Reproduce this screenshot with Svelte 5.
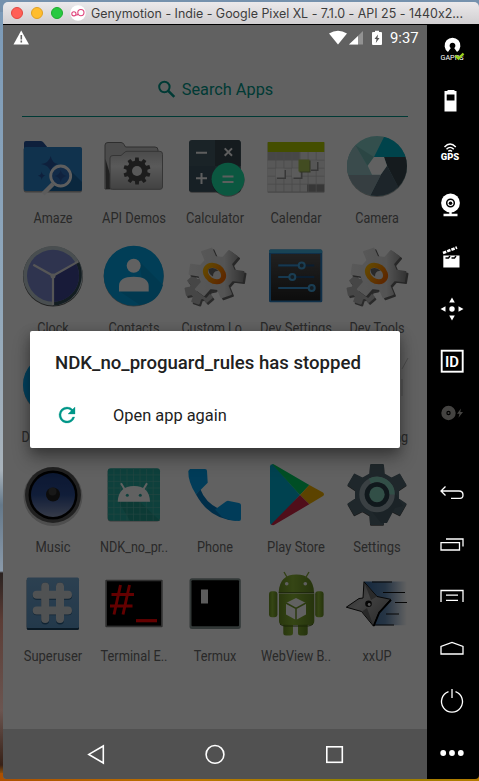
<script>
  const apps = [
    { id: 'amaze', label: 'Amaze', w: 39 },
    { id: 'api', label: 'API Demos', w: 64 },
    { id: 'calc', label: 'Calculator', w: 58 },
    { id: 'calendar', label: 'Calendar', w: 51 },
    { id: 'camera', label: 'Camera', w: 43.5 },
    { id: 'clock', label: 'Clock', w: 31.5 },
    { id: 'contacts', label: 'Contacts', w: 51 },
    { id: 'devgear', label: 'Custom Lo..', w: 67 },
    { id: 'devset', label: 'Dev Settings', w: 72 },
    { id: 'devgear', label: 'Dev Tools', w: 55 },
    { id: 'download', label: 'Downloads', w: 63 },
    { id: 'none', label: '', w: 10 },
    { id: 'none', label: '', w: 10 },
    { id: 'none', label: '', w: 10 },
    { id: 'messaging', label: 'Messaging', w: 62 },
    { id: 'music', label: 'Music', w: 35 },
    { id: 'ndk', label: 'NDK_no_pr..', w: 68 },
    { id: 'phone', label: 'Phone', w: 36 },
    { id: 'play', label: 'Play Store', w: 58 },
    { id: 'settings', label: 'Settings', w: 47.5 },
    { id: 'superuser', label: 'Superuser', w: 58.5 },
    { id: 'terminal', label: 'Terminal E..', w: 67 },
    { id: 'termux', label: 'Termux', w: 42.5 },
    { id: 'webview', label: 'WebView B..', w: 70 },
    { id: 'ninja', label: 'xxUP', w: 29 }
  ];

  // Closed outline of a cog: n teeth between the inner and the outer radius.
  function gear(cx, cy, n, ro, ri, base, tip, rot, squash = 1) {
    const pts = [];
    for (let i = 0; i < n; i++) {
      const a = rot + (i * 2 * Math.PI) / n;
      for (const [r, d] of [[ri, -base], [ro, -tip], [ro, tip], [ri, base]]) {
        pts.push((cx + r * Math.cos(a + d)).toFixed(2) + ' ' + (cy + squash * r * Math.sin(a + d)).toFixed(2));
      }
    }
    return 'M' + pts.join('L') + 'Z';
  }
  const apiGear = gear(35, 37, 10, 13.7, 10.5, 0.2, 0.13, 0.31);
  const settingsGear = gear(32, 31.5, 6, 30, 21.5, 0.31, 0.2, Math.PI / 6);
  const bigGear = gear(33.5, 29, 6, 27, 17.5, 0.3, 0.19, 0.15, 0.92);
  const smallGear = gear(17, 45, 6, 14.5, 9.5, 0.36, 0.24, 0.85);
  const gridLines = [11.9, 18.4, 25, 31.5, 38, 44.6, 51.2];
</script>

<div class="desktop">
  <div class="window">
    <header class="titlebar">
      <i class="dot red"></i><i class="dot yellow"></i><i class="dot green"></i>
      <svg class="logo" width="16" height="16" viewBox="0 0 16 16">
        <circle cx="8" cy="8" r="7.8" fill="#fff" />
        <g fill="none" stroke="#e0457c" stroke-width="1.1"><circle cx="3.900" cy="8.800" r="2.100" /><circle cx="10.900" cy="7.600" r="3.100" /><path d="M6 9.700q1 .8 2-.5" /></g>
      </svg>
      <svg class="title" width="376" height="20"><text x="1" y="15.2" textLength="372" lengthAdjust="spacingAndGlyphs">Genymotion - Indie - Google Pixel XL - 7.1.0 - API 25 - 1440x2...</text></svg>
    </header>

    <div class="body">
      <main class="phone">
        <div class="launcher">
          <div class="search">
            <svg width="20" height="20" viewBox="0 0 20 20"><g fill="none" stroke="#009688" stroke-width="2"><circle cx="7.400" cy="7" r="5.200" /><path d="M11 10.600L17.300 16.900" stroke-width="2.600" /></g></svg>
            <span>Search Apps</span>
          </div>
          <div class="grid">
            {#each apps as app}
              <div class="app">
                <svg class="icon" width="64" height="64" viewBox="0 0 64 64">
                  {#if app.id === 'amaze'}
                    <path d="M3 14V9q0-2 2-2h15q1.5 0 2.5 1.5L27 14z" fill="#24549b" />
                    <rect x="2.7" y="13.5" width="58.3" height="45" rx="2" fill="#222" opacity=".4" />
                    <rect x="2.7" y="13" width="58.3" height="44" rx="2" fill="#2a80c6" />
                    <path d="M47 34L61 48V55q0 2-2 2H26z" fill="#1c649f" />
                    <path d="M29.700 22Q31 29 37 30Q31 31 29.700 38Q28 31 20 30Q28 29 29.700 22M20.700 37.500q.5 4 4 4.200q-3.500.2-4 4.300q-.5-4-4-4.300q3.500-.2 4-4.200" fill="#25539b" />
                    <circle cx="39.700" cy="42" r="10" fill="#306fb9" stroke="#f2f2f2" stroke-width="2.800" />
                    <path d="M39.700 36q1 5 6 6q-5 1-6 6q-1-5-6-6q5-1 6-6" fill="#2a589f" />
                    <path d="M32 50L22 60" stroke="#eee" stroke-width="4.500" />
                  {:else if app.id === 'api'}
                    <path d="M3 55V11q0-2.500 3-2.500h13q2 0 3 2l1.500 2.500H53q3 0 3 3v38z" fill="#c4c4c4" stroke="#777" stroke-width="1" />
                    <path d="M3.500 25L8 40V55H4z" fill="#555" />
                    <path d="M8 53V24q0-2.500 3-2.500h8l4-3.500q1-.7 2-.7H58q2.500 0 2.500 3V53q0 2.300-2.500 2.300H10.500Q8 55.300 8 53z" fill="url(#silver)" stroke="#888" />
                    <path d={apiGear} fill="#484848" /><circle cx="35" cy="37" r="5" fill="#e2e2e2" />
                  {:else if app.id === 'calc'}
                    <rect x="6" y="6.800" width="51.700" height="52" rx="3" opacity=".4" />
                    <rect x="6" y="6" width="51.700" height="51.700" rx="3" fill="#455a64" />
                    <path d="M32 6h22.700q3 0 3 3V32H32z" fill="#37474f" /><path d="M6 32h26v25.700H9q-3 0-3-3z" fill="#3c5360" />
                    <path d="M13 18.700h11M13 44.300h11M18.500 39v11M41.700 14.400l7.300 7.300m0-7.300l-7.300 7.300" stroke="#f2f2f2" stroke-width="2" />
                    <circle cx="45" cy="46.300" r="16.500" opacity=".4" /><circle cx="45" cy="45.300" r="16.500" fill="#1de0a6" />
                    <path d="M39.500 42.500h11M39.500 48h11" stroke="#eaf5f0" stroke-width="2.200" />
                  {:else if app.id === 'calendar'}
                    <rect x="3.700" y="9" width="56.600" height="49.500" opacity=".4" />
                    <rect x="3.700" y="8" width="56.600" height="49.700" fill="#e2e2e2" />
                    <path d="M3.700 18h32v8h-32z" fill="#b8b8b8" /><path d="M43 50h17.300v7.700H43z" fill="#8d8d8d" />
                    <path d="M3.700 26.200H60.300M3.700 34.200H60.300M3.700 42.200H60.300M3.700 50.200H60.300M11.800 18v40M19.900 18v40M28 18v40M36 18v40M44.100 18v40M52.200 18v40" stroke="#bdbdbd" stroke-width=".8" />
                    <path d="M3.700 8h56.600v10H3.700z" fill="#afca00" />
                    <path d="M13 36h9v9h-9zM29.500 36h9v9h-9zM47 28h7.500v9H47z" fill="#8d8d8d" />
                    <rect x="11.700" y="34.500" width="8.800" height="9" fill="#eee" /><rect x="28" y="34.500" width="8.800" height="9" fill="#eee" /><rect x="45.500" y="26.500" width="7.500" height="9" fill="#ddd" />
                    <rect x="35.500" y="26.500" width="11" height="12" fill="#7c8759" /><rect x="34.500" y="25.500" width="11" height="12" fill="#aac455" />
                  {:else if app.id === 'camera'}
                    <circle cx="32" cy="33" r="30" opacity=".35" />
                    <clipPath id="lens"><circle cx="32" cy="32" r="30" /></clipPath>
                    <g clip-path="url(#lens)">
                      <rect width="64" height="64" fill="#83cbc7" />
                      <path d="M10 11L29 23L22.700 32z" fill="#6fb5b0" />
                      <path d="M40.500 0H64V23H29z" fill="#00acc1" />
                      <path d="M39 23H64V53L54 55L42 31.700z" fill="#37474f" />
                      <path d="M42 31.700L55 56L44 64H24L35.700 40.700z" fill="#4b5f6c" />
                      <path d="M0 40.700H36L24 64H0z" fill="#8ca0a8" />
                      <path d="M10.700 11.700L27 40.700H0V12z" fill="#95c0c4" />
                    </g>
                    <path d="M29 23H39L42 31.700L35.700 40.700H27L22.700 31.700z" fill="#fafafa" />
                  {:else if app.id === 'clock'}
                    <circle cx="32" cy="32.500" r="30" fill="#555" /><circle cx="32" cy="31.700" r="29.800" fill="#bcc9cd" />
                    <path d="M32 31.700L57.800 17Q65 33 55 49.500Q46 61 32 61.500z" fill="#334b57" />
                    <circle cx="32" cy="31.700" r="26" fill="#7986cb" />
                    <path d="M32 31.700L54.500 18.700A26 26 0 0 1 32 57.700z" fill="#3f4694" />
                    <path d="M32 61V31.700L12.300 20.700M32 31.700L57.500 17.400" fill="none" stroke="#ddd" stroke-width="2.200" /><circle cx="32" cy="32" r="2.500" fill="#ddd" />
                  {:else if app.id === 'contacts'}
                    <circle cx="31.700" cy="32.500" r="30" opacity=".4" /><circle cx="31.700" cy="31.700" r="30" fill="#03a0df" />
                    <path d="M37 17L61 41Q56 59 38 61L17 47L40 35z" fill="#0394cf" />
                    <circle cx="31.700" cy="21.700" r="7" fill="#fafafa" /><path d="M17 47.400V42q0-9.300 14.700-9.300T46.700 42v5.400z" fill="#fafafa" />
                  {:else if app.id === 'devgear'}
                    <g stroke-width="2" stroke-linejoin="round">
                      <path d={smallGear} transform="translate(1.500 2)" fill="#6e6e6e" stroke="#6e6e6e" /><path d={smallGear} fill="#b5b5b5" stroke="#b5b5b5" />
                      <path d={bigGear} transform="translate(2 1.800)" fill="#666" stroke="#666" /><path d={bigGear} fill="url(#steel)" stroke="url(#steel)" />
                    </g>
                    <ellipse cx="31.500" cy="29.500" rx="9.800" ry="7.500" transform="rotate(35 31.500 29.500)" fill="#e2e2e2" stroke="url(#amber)" stroke-width="5" />
                    <path d="M25.500 25q6-3 10 2q-5.500-.5-5.500 5.500q-5-3-4.500-7.500" fill="#6a6a6a" />
                  {:else if app.id === 'devset'}
                    <rect x="5" y="5.400" width="53.300" height="52.800" rx="1.500" fill="#2b7bbb" /><path d="M5 9V7q0-1.600 1.600-1.600h50q1.600 0 1.600 1.600v2z" fill="#3fb0de" />
                    <rect x="7" y="10" width="49.300" height="46.500" fill="url(#panel)" />
                    {#each [[21.4, 37.7], [33, 28.3], [44, 47.7]] as [y, x]}
                      <path d="M14.300 {y}H50.300" stroke="#1c4b79" stroke-width="2" /><path d="M14.300 {y}H{x}" stroke="#3993d1" stroke-width="2" />
                      <circle cx={x} cy={y} r="3" fill="#344c5c" stroke="#439fd6" stroke-width="2" />
                    {/each}
                  {:else if app.id === 'download'}
                    <circle cx="32" cy="32.500" r="30" opacity=".3" /><circle cx="32" cy="31.700" r="30" fill="#03a9f4" />
                  {:else if app.id === 'messaging'}
                    <path d="M57 16L63 5M57 43V26" stroke="#c8c8c8" stroke-width="1" />
                  {:else if app.id === 'music'}
                    <circle cx="32" cy="33.500" r="29.500" opacity=".2" /><circle cx="32" cy="32" r="28" fill="#575757" /><circle cx="32" cy="32" r="24.500" fill="#050505" />
                    <circle cx="32" cy="32" r="22" fill="url(#speaker)" /><circle cx="32" cy="31.500" r="7" fill="#202020" /><circle cx="31.500" cy="28.500" r="4" fill="#4c4c4c" opacity=".7" />
                  {:else if app.id === 'ndk'}
                    <rect x="5.700" y="6" width="52.300" height="52.500" rx="3" opacity=".4" /><rect x="5.700" y="5.300" width="52.300" height="52.400" rx="3" fill="#26a69a" />
                    <path d="M37 38L58 57.700H28L16 38z" fill="#1f9588" />
                    {#each gridLines as g}
                      <path d="M{g} 5.300v52.400M5.700 {g}h52.300" stroke="#60b3aa" stroke-width=".6" />
                    {/each}
                    <path d="M15.700 38.700Q16.500 23 32 23T48 38.700z" fill="#fafafa" /><path d="M19 20.300l3.600 6M45 20.300l-3.600 6" stroke="#fafafa" stroke-width="2" />
                    <circle cx="25.300" cy="32.300" r="1.500" fill="#26a69a" /><circle cx="38.300" cy="32.300" r="1.500" fill="#26a69a" />
                  {:else if app.id === 'phone'}
                    <path d="M7 6h15q2 0 2 2l.7 11.700L13 31.500Q5 19 5.300 8z" fill="#039be5" />
                    <path d="M17.500 26.500Q22 39 36 46L54 57.800Q27 57 13 31.500z" fill="#0277bd" />
                    <path d="M32 46.500L43 38.500q1.500-1 3-.5L56 40q2 .3 2 2V56q0 2-2 2Q47 58 39 54z" fill="#039be5" />
                  {:else if app.id === 'play'}
                    <path d="M6 3.500V60q0 2 2.500 2L36 32L9 1.200Q6 1 6 3.500" fill="#00a9ce" />
                    <path d="M8 1q1-.3 3 1L45.300 22L36 32z" fill="#00ca60" /><path d="M45.300 22L59 29.500q2 1.800 0 3.500L45.300 41.300L36 32z" fill="#ecae00" />
                    <path d="M36 32L45.300 41.300L10 62q-1.500.5-3-.5z" fill="#ce2445" />
                  {:else if app.id === 'settings'}
                    <path d={settingsGear} transform="translate(0 .8)" fill="#444" stroke="#444" stroke-width="2" stroke-linejoin="round" />
                    <path d={settingsGear} fill="#50656f" stroke="#50656f" stroke-width="2" stroke-linejoin="round" />
                    <path d="M44 19L58 43L50 45L42 60H36L24 45z" fill="#465a64" />
                    <circle cx="32" cy="31.500" r="15" fill="none" stroke="#95a5ac" stroke-width="5.500" />
                    <path d="M25 18.200A15 15 0 0 1 47 31.500" fill="none" stroke="#80cbb8" stroke-width="5.500" />
                    <circle cx="32" cy="31.500" r="12.300" fill="#2b3f48" /><circle cx="32" cy="31.500" r="7.700" fill="#80cbb8" />
                  {:else if app.id === 'superuser'}
                    <rect x="5.700" y="7" width="52.300" height="51" rx="1.500" fill="#1c405d" /><rect x="5.700" y="5.500" width="52.300" height="50.500" rx="1.500" fill="url(#su)" />
                    <path d="M24.200 14.500v34M39 14.500v34M15.700 23.700h31.500M15.700 39.300h31.500" stroke="#285b83" stroke-width="8" stroke-linecap="round" />
                    <path d="M24.200 14.500v32.500M39 14.500v32.500M15.700 22.800h31.300M15.700 38.500h31.300" stroke="#cfd2d5" stroke-width="8" stroke-linecap="round" />
                  {:else if app.id === 'terminal'}
                    <rect x="3.300" y="7.800" width="57.400" height="47.500" rx="1" fill="#777" /><rect x="5" y="9.300" width="54" height="44.300" fill="#000" />
                    <path d="M18.500 13L12 42.500M27.500 13L21 42.500M9.500 22.500H32M8 34H30.500" stroke="#ff0000" stroke-width="2.900" /><path d="M34 48.700h21" stroke="#ff0000" stroke-width="3.200" />
                  {:else if app.id === 'termux'}
                    <rect x="6.500" y="6.200" width="51.300" height="50.800" rx="2.500" fill="#81908f" /><rect x="8.500" y="8.300" width="47.500" height="46" rx="1" fill="#000" />
                    <rect x="18" y="17.500" width="7" height="14" fill="#eee" />
                  {:else if app.id === 'webview'}
                    <g fill="url(#droid)">
                      <path d="M14.700 20.200Q15.500 2.500 32.400 2.500T50 20.200z" /><path d="M15 21.500h35.300V49q0 4-4 4H19q-4 0-4-4z" />
                      <rect x="5" y="19.200" width="8.400" height="26" rx="3" /><rect x="51.200" y="19.200" width="8.400" height="26" rx="3" />
                      <path d="M19.300 52H29v9q0 2.500-3 2.500h-4q-2.700 0-2.700-2.500zM34 52h9.700v9q0 2.500-3 2.500h-4Q34 63.500 34 61z" />
                    </g>
                    <path d="M20 0l3.500 6M45 0l-3.500 6" stroke="#82a535" stroke-width="1.400" />
                    <path d="M14.700 20.600h35.400M16 52q2 2 5 2h23q3 0 5-2" fill="none" stroke="#425c12" stroke-width="1" />
                    <circle cx="22.700" cy="11.800" r="1.800" fill="#f5f5f5" /><circle cx="41.300" cy="11.800" r="1.800" fill="#f5f5f5" />
                    <path d="M32 26L42 31V42.500L32 48L22 42.500V31z" fill="#fafafa" /><path d="M22 31l10 5.500L42 31M32 36.500V48" fill="none" stroke="#6f9527" stroke-width="1.500" />
                  {:else if app.id === 'ninja'}
                    <path d="M19 9.500H62V53.200H28z" fill="url(#trail)" />
                    <path d="M27 10H47M38 20.500H60M50 30.500H62M41 42H54M28 53H49" stroke="#111" stroke-width="1.200" />
                    <path d="M19 9.800L32 24.500L45.700 27.300L34 40.500L28.500 54.200L16.500 39.500L1.300 35.200L14 26.500L18 26z" fill="url(#blade)" stroke="#111" stroke-width="1" />
                    <path d="M19.500 11L32 24.500L26 28zM28 52.500L17 39.500L22 36z" fill="#555" opacity=".7" />
                    <path d="M46 27.800L34.300 40.500L28.700 54" fill="none" stroke="#000" stroke-width="1.900" /><circle cx="23.500" cy="31.800" r="3.300" fill="#111" /><circle cx="24.200" cy="32.500" r="1.400" fill="#ddd" />
                  {/if}
                </svg>
                <svg class="label" width="80" height="24"><text x="40" y="15.500" text-anchor="middle" textLength={app.w} lengthAdjust="spacingAndGlyphs">{app.label}</text></svg>
              </div>
            {/each}
          </div>
          <svg width="0" height="0" class="defs">
            <defs>
              <linearGradient id="silver" x1="0" y1="0" x2="0" y2="1"><stop offset="0" stop-color="#c2c2c2" /><stop offset=".4" stop-color="#e6e6e6" /><stop offset="1" stop-color="#aaa" /></linearGradient>
              <linearGradient id="steel"><stop offset="0" stop-color="#e4e4e4" /><stop offset=".65" stop-color="#d8d8d8" /><stop offset="1" stop-color="#858585" /></linearGradient>
              <linearGradient id="amber"><stop offset="0" stop-color="#ffb400" /><stop offset="1" stop-color="#f26a00" /></linearGradient>
              <linearGradient id="blade" x1="0" y1="0" x2="1" y2="1"><stop offset="0" stop-color="#666" /><stop offset=".4" stop-color="#aaa" /><stop offset="1" stop-color="#666" /></linearGradient>
              <linearGradient id="panel" x1="0" y1="0" x2="0" y2="1"><stop offset="0" stop-color="#555" /><stop offset="1" stop-color="#222" /></linearGradient>
              <linearGradient id="speaker" x1="0" y1="0" x2="0" y2="1"><stop offset="0" stop-color="#203f82" /><stop offset=".5" stop-color="#2c4c92" /><stop offset="1" stop-color="#8b98bb" /></linearGradient>
              <linearGradient id="su" x1="0" y1="0" x2="0" y2="1"><stop offset="0" stop-color="#72a5cf" /><stop offset="1" stop-color="#5b93c1" /></linearGradient>
              <linearGradient id="droid"><stop offset="0" stop-color="#698d22" /><stop offset=".4" stop-color="#8ab436" /><stop offset="1" stop-color="#628522" /></linearGradient>
              <linearGradient id="trail"><stop offset="0" stop-color="#35669c" /><stop offset=".5" stop-color="#6288b1" /><stop offset="1" stop-color="#fafafa" /></linearGradient>
            </defs>
          </svg>
        </div>
        <div class="scrim"></div>

        <div class="status">
          <svg width="16" height="15" viewBox="0 0 16 15"><path d="M8.200 .5L16 14.500H.5z" fill="#fff" /><path d="M8.300 5v4.500M8.300 10.500v2" stroke="#616161" stroke-width="1.600" /></svg>
          <span class="spacer"></span>
          <svg width="60" height="16" viewBox="0 0 60 16">
            <path d="M5 3.500Q14 -2.200 23 3.500L14 14.500z" fill="#fff" />
            <path d="M39 1V14.500H25z" fill="#929292" /><path d="M34 6V14.500H25z" fill="#fff" />
            <path d="M49 2h2V.7h4V2h2q1 0 1 1V14q0 1-1 1h-8q-1 0-1-1V3q0-1 1-1" fill="#fff" /><path d="M54 4.500l-3.500 4.500h2l-.7 4L55.500 8h-2z" fill="#555" />
          </svg>
          <time>9:37</time>
        </div>

        <nav>
          <svg width="424" height="50" viewBox="0 0 424 50"><g fill="none" stroke="#fff" stroke-width="1.600"><path d="M100.300 17V34L85.800 25.400z" /><circle cx="212" cy="25.400" r="8.900" /><rect x="323.800" y="17.800" width="15.500" height="15.500" /></g></svg>
        </nav>

        <section class="dialog">
          <h1>NDK_no_proguard_rules has stopped</h1>
          <div class="action">
            <svg width="24" height="24" viewBox="0 0 24 24"><path fill="#009688" stroke="#009688" stroke-width=".3" d="M17.650 6.350A7.960 7.960 0 0 0 12 4a8 8 0 1 0 7.730 10h-2.080A6 6 0 1 1 12 6c1.660 0 3.140.69 4.220 1.780L13 11h7V4z" /></svg>
            <span>Open app again</span>
          </div>
        </section>
      </main>

      <aside>
        <div class="tools">
          <svg viewBox="-14 -14 28 28">
            <path d="M-2.600 2A5.400 5.400 0 1 1 3.600 2" fill="none" stroke="#fff" stroke-width="5" transform="translate(0 -1)" />
            <circle cx=".5" cy="-3.500" r="2.300" fill="#000" />
            <text x="-11.500" y="10.500" font-size="7.500" textLength="23" lengthAdjust="spacingAndGlyphs" fill="#fff">GAPPS</text>
            <path d="M3.500 6.500l3 3 5-5" fill="none" stroke="#9ad01c" stroke-width="2.400" />
          </svg>
          <svg viewBox="-14 -14 28 28"><path fill="#fff" fill-rule="evenodd" d="M-6.500-10h2v-1h7v1h2V10.500H-7.500V-10zM-5.300-6.500V-.5H2.500V-6.500z" /></svg>
          <svg viewBox="-14 -14 28 28"><g fill="none" stroke="#fff" stroke-width="1.400"><path d="M-7.500-6Q-2-12 3.800-6M-5.500-3.700Q-2-7.500 1.800-3.700M-3.700-1.600Q-2-3.500 0-1.600" /></g><text x="-11.300" y="7.300" font-size="8.500" font-weight="900" textLength="18.500" lengthAdjust="spacingAndGlyphs" fill="#fff">GPS</text></svg>
          <svg viewBox="-14 -14 28 28"><path d="M-8.500 10H5.500M-1.500 4V10" stroke="#fff" stroke-width="2.400" /><circle cx="-1.500" cy="-2" r="9.400" fill="#fff" /><circle cx="-1.500" cy="-2" r="3.800" fill="#fff" stroke="#000" stroke-width="1.500" /><circle cx="-1.500" cy="-1.800" r="1.800" /></svg>
          <svg viewBox="-14 -14 28 28"><path d="M-8.700-1.500H7.500V10.500H-8.700z" fill="#fff" /><path d="M-9-4L5-9.500" stroke="#fff" stroke-width="2.600" stroke-dasharray="3.500 1" /><path d="M-6.500 1h3l1.500-2M-.5 1h3L4-1" stroke="#000" stroke-width="1.400" fill="none" /></svg>
          <svg viewBox="-14 -14 28 28"><path fill="#fff" d="M0-11.500l2.800 5h-5.600zM0 11.500l2.800-5h-5.600zM-11.500 0l5-2.800v5.600zM11.500 0l-5-2.800v5.600z" /><circle r="2.700" fill="#fff" /></svg>
          <svg viewBox="-14 -14 28 28"><rect x="-10.300" y="-10.300" width="21" height="21" fill="none" stroke="#fff" stroke-width="1.900" /><text x="-7" y="5.600" font-size="15.500" font-weight="600" textLength="14" lengthAdjust="spacingAndGlyphs" fill="#fff">ID</text></svg>
          <svg viewBox="-14 -14 28 28"><circle cx="-3.500" cy="0" r="4.700" fill="none" stroke="#444341" stroke-width="5" /><circle cx="-3.500" r="1" fill="#444341" /><path d="M9-4.500L5 .8h2.500l-1 4L11-1H8.300z" fill="#444341" /></svg>
        </div>
        <div class="tools keys">
          <svg viewBox="-14 -14 28 28"><path d="M-6.500-5.500L-11-1l4.500 4.500M-11-1H7Q11-1 11 3T7 6.300H-1" /></svg>
          <svg viewBox="-14 -14 28 28"><path d="M-11-1.300H7.500V6H-11zM-6-5H11V2.500" /></svg>
          <svg viewBox="-14 -14 28 28"><path d="M-11 6V-5.500H11V6M-6-.8H6M-6 4.300H6" /></svg>
          <svg viewBox="-14 -14 28 28"><path d="M-11 6V-1.500L0-5.500L11-1.500V6z" /></svg>
          <svg viewBox="-14 -14 28 28"><path d="M-3.500-9.300A10.500 10.500 0 1 0 3.500-9.300M0-12V-3" /></svg>
          <svg viewBox="-14 -14 28 28"><g fill="#fff" stroke="none"><circle cx="-8.800" r="2.900" /><circle r="2.900" /><circle cx="8.800" r="2.900" /></g></svg>
        </div>
      </aside>
    </div>
  </div>
</div>

<style>
  :global(body) { margin: 0; overflow: hidden; }
  .desktop {
    box-sizing: border-box; width: 479px; height: 781px; padding: 2px 0 2px 3px;
    background:
      linear-gradient(#7591ad, #7591ad) 0 0 / 100% 12px no-repeat,
      linear-gradient(90deg, #ac5000, #bd7500 40%, #8f8100 75%, #b57b00) 0 100% / 100% 8px no-repeat,
      linear-gradient(#7b9ab8 0, #91a8bb 300px, #a9b3bb 470px, #65798a 505px, #8a9aaa 571px, #2a2220 573px, #5b3c35 620px, #6b5550 710px, #372117 765px, #a45a08 775px);
    font-family: Roboto, sans-serif;
  }
  .window { height: 777px; border-radius: 5px 5px 4px 4px; overflow: hidden; display: flex; flex-direction: column; }
  .titlebar {
    box-sizing: border-box; height: 23px; padding-left: 8px; display: flex; align-items: center; gap: 8px;
    background: linear-gradient(#ebe9eb, #d1cfd1); border-bottom: 1px solid #000;
  }
  .dot { box-sizing: border-box; width: 12px; height: 12px; border-radius: 50%; flex: none; }
  .red { background: #ff5f57; border: 1px solid #e2463f; }
  .yellow { background: #ffbd2e; border: 1px solid #dfa023; }
  .green { background: #28c940; border: 1px solid #1dac2c; }
  .logo { flex: none; margin-left: -1px; }
  .title { flex: none; overflow: visible; margin-left: -4px; font-family: Inter, sans-serif; font-size: 12.800px; font-feature-settings: "calt" 0; fill: #3c3c3c; }
  .body { flex: 1; display: flex; background: #000; }
  .phone { position: relative; width: 424px; height: 754px; overflow: hidden; background: #fafafa; }
  .launcher { padding: 55px 14px 0 9.500px; width: 405px; }
  .search {
    box-sizing: border-box; width: 386px; height: 37px; margin-left: 9.500px; padding-bottom: 16px;
    display: flex; justify-content: center; align-items: center; gap: 5px;
    border-bottom: 1px solid #009688; color: #009688; font-size: 16.300px; line-height: 20px;
  }
  .grid { display: grid; grid-template-columns: repeat(5, 81px); grid-auto-rows: 109.600px; margin-top: 17px; }
  .app { display: flex; flex-direction: column; align-items: center; }
  .icon { overflow: visible; flex: none; }
  .label { overflow: visible; margin-top: 9px; flex: none; font-size: 15px; fill: #6b6b6b; }
  .defs { display: block; }
  .scrim { position: absolute; inset: 0; background: rgba(0, 0, 0, .612); }
  .status { position: absolute; left: 10px; right: 9px; top: 4px; height: 17px; display: flex; align-items: center; }
  .spacer { flex: 1; }
  .status time { margin-left: 6px; width: 28px; color: #fff; font-size: 14.800px; font-weight: 400; line-height: 18px; padding-top: 1px; white-space: nowrap; }
  nav { position: absolute; left: 0; bottom: 0; width: 424px; height: 50px; background: #515151; }
  .dialog {
    box-sizing: border-box; position: absolute; left: 27px; top: 306px; width: 370px; height: 117px; padding: 20px 25px 0;
    background: #fff; border-radius: 2px; box-shadow: 0 10px 18px rgba(0, 0, 0, .32), 0 3px 12px rgba(0, 0, 0, .25); color: #212121;
  }
  h1 { margin: 0; font-size: 18.600px; line-height: 24px; font-weight: 500; white-space: nowrap; }
  .action { margin-top: 27.500px; display: flex; align-items: center; gap: 34px; font-size: 16.400px; line-height: 24px; }
  .action span { padding-top: 1px; }
  aside { width: 52px; display: flex; flex-direction: column; padding-top: 9.500px; gap: 51px; }
  .tools { display: flex; flex-direction: column; gap: 24.100px; padding-left: 11px; }
  .tools svg { width: 28px; height: 28px; display: block; overflow: visible; }
  .keys svg { fill: none; stroke: #fff; stroke-width: 1.300; }
</style>
